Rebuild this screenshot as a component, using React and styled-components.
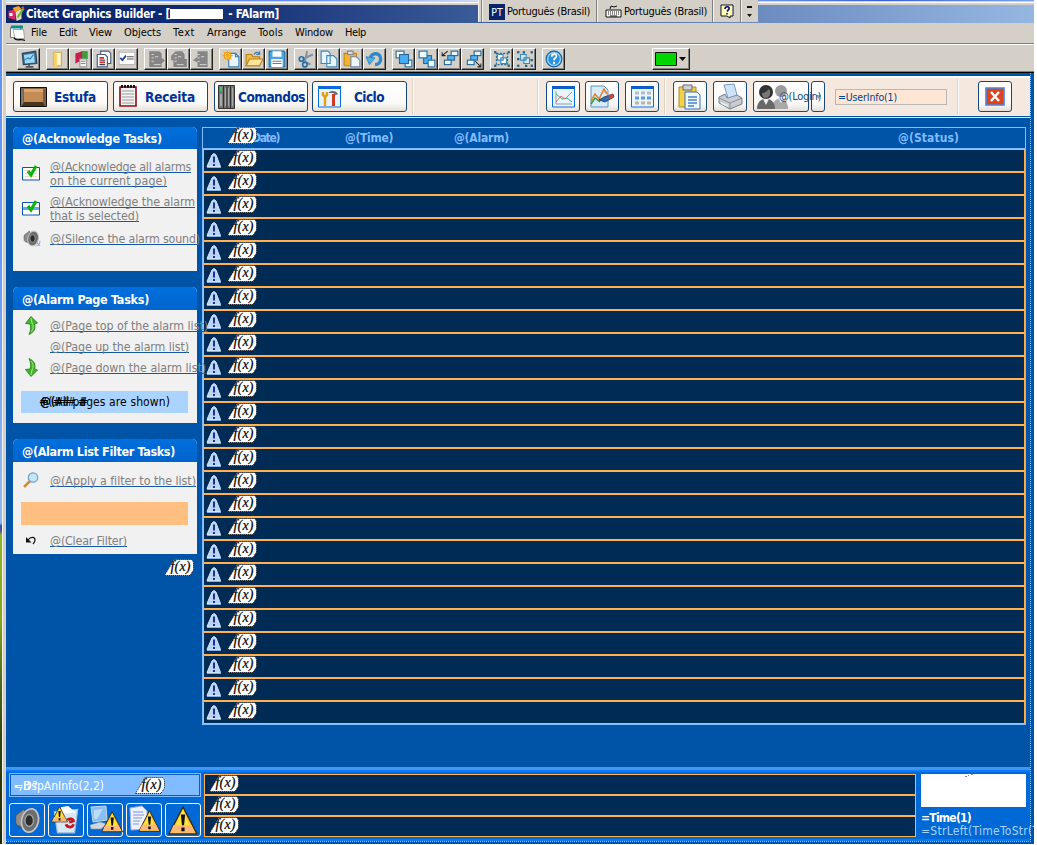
import React, { useLayoutEffect, useRef, useState } from "react";
import styled, { createGlobalStyle } from "styled-components";

const UI = `"DejaVu Sans Condensed", "DejaVu Sans", "Noto Sans", sans-serif`;

const Global = createGlobalStyle`
  * { box-sizing: border-box; }
  body { margin: 0; background: #fff; overflow: hidden; font-family: ${UI}; }
  svg { display: block; flex: none; overflow: visible; }
`;

/* ---------- text tracked to a given width ---------- */
const Tracked = styled.span`
  display: block;
  flex: none;
  white-space: pre;
  width: ${(p) => p.$w}px;
  font-size: ${(p) => p.$size || 12}px;
  line-height: ${(p) => p.$lh || 14}px;
  font-weight: ${(p) => (p.$bold ? 700 : 400)};
  color: ${(p) => p.$color || "inherit"};
`;
function Label({ w, size, lh, bold, color, children }) {
  const ref = useRef(null);
  const [spacing, setSpacing] = useState(0);
  useLayoutEffect(() => {
    setSpacing((w - ref.current.getBoundingClientRect().width) / children.length);
  }, [w, children]);
  return (
    <Tracked $w={w} $size={size} $lh={lh} $bold={bold} $color={color}>
      <span ref={ref} style={{ letterSpacing: spacing }}>{children}</span>
    </Tracked>
  );
}

/* ---------- window frame ---------- */
const Desktop = styled.div`
  width: 1034px; height: 844px; display: flex; overflow: hidden; position: relative;
  background: #d4d0c8;
`;
const Wallpaper = styled.div`
  width: 2px; flex: none;
  background: linear-gradient(#5f8ff0 0, #6c9df5 300px, #8db4f0 480px, #8fb5ee 523px, #3a4ea8 526px, #4656a8 531px, #8eb52a 535px, #84a51c 620px, #4f6a1c 680px, #31430f 740px, #1c2a0c 844px);
`;
const Frame = styled.div`
  width: 4px; flex: none; background: #d4d0c8; border-left: 1px solid #f4f2ec; border-right: 1px solid #d4d0c8;
`;
const Window = styled.div`
  flex: 1; min-width: 0; display: flex; flex-direction: column;
`;
const SkyLine = styled.div`
  height: 5px; flex: none;
  background: linear-gradient(transparent 1px, #d4d0c8 1px, #d4d0c8 2px, #fff 2px, #fff 3px, #d4d0c8 3px), linear-gradient(90deg, #dce8fb, #5d86e6 15%, #6a90ee 30%, #dfe8fb 48%, #6a8de4 75%, #3d62d2 85%, #7da2ee);
`;
const TitleBar = styled.div`
  height: 18px; flex: none; display: flex; align-items: center; padding: 0 0 0 2px; color: #fff;
  background: linear-gradient(90deg, #0a246a 0, #0f2a70 180px, #3a5a98 470px, #6c8cc0 752px, #96b6e2 1028px);
`;
const Redacted = styled.div`width: 53px; height: 10px; background: #fff; margin-right: 2px;`;
const MenuBar = styled.div`
  height: 21px; flex: none; display: flex; align-items: center; gap: 12px; padding: 0 0 0 4px;
  color: #000; border-bottom: 1px solid #808080;
`;
const MenuIcon = styled.div`width: 9px; flex: none;`;
const ToolBar = styled.div`
  height: 29px; flex: none; display: flex; gap: 6px; padding: 3px 0 0 11px;
  border-top: 1px solid #fff; border-bottom: 1px solid #000; box-shadow: inset 0 -1px #808080;
`;
const ToolGroup = styled.div`display: flex; margin-left: ${(p) => p.$push || 0}px;`;
const ToolButton = styled.div`
  width: ${(p) => p.$w || 23}px; height: 22px; display: flex; align-items: center; justify-content: center;
  background: #d4d0c8; border: 1px solid; border-color: #fff #202020 #202020 #fff;
  box-shadow: inset -1px -1px #808080;
`;
const LangBar = styled.div`
  position: absolute; left: 478px; top: 0; width: 280px; height: 22px; display: flex;
  background: #d4d0c8; color: #000; border-left: 1px solid #f2f0ea; padding-left: 2px;
`;
const LangCell = styled.div`
  width: ${(p) => p.$w}px; flex: none; display: flex; align-items: center; gap: 2px; padding: 1px 0 0 ${(p) => p.$pl}px;
  border-left: 1px solid #808080; box-shadow: inset 1px 0 #f4f2ec;
`;
const PT = styled.div`
  width: 16px; height: 16px; flex: none; background: #0a246a; color: #fff; font-size: 10.5px; line-height: 17px; text-align: center;
`;

/* ---------- page ---------- */
const Page = styled.div`
  flex: 1; min-height: 0; display: flex; background: #0054a8;
`;
const PageArea = styled.div`
  width: 1025px; flex: none; border-right: 1px dotted #ffb066; display: flex; flex-direction: column; height: 769px;
  border-bottom: 1px dotted #ffb066;
`;
const NavBar = styled.div`
  height: 40px; flex: none; margin-top: 3px; display: flex; align-items: center; padding: 0 0 0 7px;
  background: linear-gradient(90deg, #fdf7f2, #f4e8df 8px); border-top: 2px solid #fff; border-bottom: 1px solid #e8eef8;
`;
const NavRule = styled.div`height: 1px; flex: none; background: #dfe9f6; margin-top: 1px;`;
const NavButton = styled.div`
  width: ${(p) => p.$w || 34}px; height: 31px; flex: none; display: flex; align-items: center;
  justify-content: ${(p) => (p.$text ? "flex-start" : "center")}; padding-left: ${(p) => p.$pl || 0}px; gap: ${(p) => p.$gap || 0}px;
  margin-left: ${(p) => p.$ml || 0}px;
  border: 1px solid #164878; border-radius: 3px; color: #003399;
  background: linear-gradient(#fff, #faf9f7 75%, #e4e0d8);
`;
const Divider = styled.div`
  width: 2px; height: 35px; flex: none; margin-left: ${(p) => p.$ml}px; background: linear-gradient(90deg, #dfd3c2 50%, #fff 50%);
`;
const UserField = styled.div`
  width: 112px; height: 16px; flex: none; margin-left: 10px; padding-left: 2px; background: #fee6d5;
  border: 1px solid #b8b8b8; color: #00438c; display: flex; align-items: center;
`;
const LoginText = styled.div`position: relative; z-index: 1; width: 0; margin-left: -10px; color: #1b4b84;`;

const Body = styled.div`height: 649px; flex: none; display: flex; padding: 9px 0 0 7px; gap: 5px;`;
const Side = styled.div`width: 184px; flex: none; display: flex; flex-direction: column; position: relative; z-index: 1;`;
const TaskPanel = styled.div`
  height: ${(p) => p.$h}px; flex: none; margin-bottom: 16px; display: flex; flex-direction: column; background: #f1f1f1;
  border-radius: 5px 5px 0 0;
`;
const TaskHead = styled.div`
  height: ${(p) => p.$h}px; flex: none; padding: ${(p) => p.$h - 17}px 0 0 9px; color: #fff; border-radius: 5px 5px 0 0;
  background: linear-gradient(#006fdd, #0064cc);
`;
const TaskRow = styled.div`
  display: flex; flex: none; margin-top: ${(p) => p.$mt}px; height: ${(p) => p.$h || 14}px; align-items: center;
`;
const IconSlot = styled.div`width: 36px; margin-right: 1px; flex: none; display: flex; justify-content: center; align-items: center; height: 0; padding-bottom: 2px;`;
const LinkLine = styled.div`
  width: max-content; height: 13px; margin-bottom: 1px; border-bottom: 1px solid #1458a4; color: #808080;
`;
const InfoBox = styled.div`
  width: 167px; height: ${(p) => p.$h}px; flex: none; margin: ${(p) => p.$mt}px 0 0 8px; padding: 4px 0 0 19px;
  background: ${(p) => p.$bg}; color: #000; display: flex;
`;
const Overprint = styled.div`width: 0; margin-left: ${(p) => p.$ml || 0}px; white-space: nowrap;`;
const SideBadge = styled.div`margin: -11px 0 0 151px;`;

const Table = styled.div`
  width: 824px; height: 598px; flex: none; border: 1px solid #80bcff; display: flex; flex-direction: column;
`;
const TableHead = styled.div`
  height: 21px; flex: none; display: flex; align-items: center; color: #80bcff; border-bottom: 1px solid #80bcff; padding-left: 24px;
`;
const HeadGap = styled.div`width: ${(p) => p.$w}px; flex: none;`;
const AlarmRow = styled.div`
  height: 23px; flex: none; background: #002b54; border: 1px solid #ffb04f; display: flex; gap: 5px; padding-left: 2px;
`;
const HeadBadge = styled.div`width: 0; height: 20px; margin-top: -2px; position: relative; z-index: 1;`;

/* ---------- footer ---------- */
const Footer = styled.div`
  flex: 1; display: flex; background: #0069d5; border-top: 3px solid #4595e8; border-bottom: 2px solid #0a78f5;
  box-shadow: inset 0 2px #087aff; padding: 3px 0 0 3px; gap: 3px;
`;
const FootLeft = styled.div`width: 192px; flex: none; display: flex; flex-direction: column; gap: 6px;`;
const InfoStrip = styled.div`
  height: 24px; border: 1px solid #80bcff; box-shadow: inset 0 0 0 1px #0a5dbb; background: #80bcff;
  display: flex; align-items: center; color: #fff; padding: 2px 1px 1px 4px;
`;
const FootButtons = styled.div`display: flex; gap: 3px;`;
const FootButton = styled.div`
  width: 36px; height: 34px; border: 1px solid #fff; border-radius: 3px; display: flex; align-items: center; justify-content: center;
  background: #0069d5;
`;
const FootList = styled.div`width: 712px; flex: none; padding-top: 1px;`;
const FootRow = styled.div`height: 21px; background: #002b54; border: 1px solid #ffb04f; padding-left: 4px;`;
const Clock = styled.div`width: 110px; flex: none; padding: 1px 0 0 2px; color: #fff;`;
const ClockBox = styled.div`width: 105px; height: 33px; background: #fff; margin-bottom: 4px; padding: 0 0 0 44px;`;

/* ---------- drawings ---------- */
const Fx = () => (
  <svg width="31" height="17" viewBox="0 0 31 17">
    <path d="M.5 16.500 10 .5H27.500L29.500 3V11L26 16.500Z" fill="#fff" />
    <path d="M.5 16.500 10 .5H27.500L29.500 3V11L26 16.500Z" stroke="#111" fill="none" strokeDasharray="1 1" />
    <text x="6.500" y="12" fontFamily="Liberation Serif, serif" fontStyle="italic" fontSize="14" textLength="20" lengthAdjust="spacing" stroke="#000" strokeWidth=".2">f(x)</text>
  </svg>
);
const RowAlert = () => (
  <svg width="16" height="19" viewBox="0 0 16 19">
    <path d="M8 3.500 10 5 14.500 16.500H1L6 5Z" fill="#b9d4f5" stroke="#d2e4fb" />
    <path d="M1 17.500h14" stroke="#7faee8" />
    <path d="M8 6.500v6M8 14v2" stroke="#0b1f8a" strokeWidth="1.800" />
  </svg>
);
const Svg = ({ w = 18, h = 18, v = "0 0 16 16", children }) => (
  <svg width={w} height={h} viewBox={v} fill="none">{children}</svg>
);
const Squares = ({ a, b, c }) => (
  <Svg>
    <rect x="1" y="1" width="7" height="6" fill={a} stroke="#27699c" />
    <rect x="9" y="9" width="6" height="6" fill={c} stroke="#27699c" />
    <rect x="4" y="4" width="8" height="8" fill={b} stroke="#27699c" />
  </Svg>
);
const BackSquares = () => (
  <Svg>
    <rect x="5" y="5" width="7" height="7" fill="#48aef4" stroke="#27699c" />
    <rect x="1" y="1" width="7" height="6" fill="#eef8ff" stroke="#27699c" />
    <rect x="9" y="9" width="6" height="6" fill="#eef8ff" stroke="#27699c" />
  </Svg>
);
const Stacks = ({ down }) => (
  <Svg>
    {[[9, 1], [6, 5], [3, 9]].map(([x, y], i) => (
      <rect key={i} x={x} y={y} width="6" height="4" fill={i === 1 ? "#55b4f5" : "#e5f3fd"} stroke="#27699c" />
    ))}
    <path d={down ? "M10 10l5 5M15 12v3h-3" : "M6 1 1 5M1 2v3h3"} stroke="#222" strokeWidth=".9" />
  </Svg>
);
const Gears = ({ d }) => (
  <Svg>
    <path d={d} fill="#858585" />
    <path d="M4 4h2M4 7h2M4 10h2M7 6h3M6 13h6" stroke="#ddd" strokeWidth=".8" />
  </Svg>
);
const GroupIcon = ({ inner }) => (
  <Svg>
    {!inner && <path d="M3 3h10v10H3Z" stroke="#277099" strokeDasharray="2 1" />}
    <path d="M4 4h5v5H4zM7 7h5v5H7z" fill={inner ? "#d8eaf5" : "#fff"} stroke="#398ab8" />
    {[[1, 1], [13, 1], [1, 13], [13, 13]].map(([x, y]) => <rect key={x + "-" + y} x={x} y={y} width="2" height="2" fill="#215a80" />)}
    {inner && <path d="M6 1h2v2H6zM1 7h2v2H1zM13 8h2v2h-2zM8 13h2v2H8z" fill="#215a80" />}
  </Svg>
);
const tools = {
  monitor: <Svg><path d="M2 3 14 1l1 11-12 1Z" fill="#3c6e96" stroke="#28455e" /><path d="m3.500 4.500 9-1.500.6 8L4.500 12Z" fill="#9fd8f8" /><path d="m4 9 3-2 2 1 3-4" stroke="#2b7db5" /><path d="M5 15h7M8 12v3" stroke="#555" strokeWidth="1.500" /></Svg>,
  folder: <Svg><path d="M4 2h7v12H4z" fill="#fff7cc" stroke="#d9a536" /><path d="m4 2 3 2v12l-3-2Z" fill="#f8cf60" /></Svg>,
  red: <Svg><path d="M8 1h6v7H8z" fill="#36a03b" /><path d="m3 3 6-2v8l-6 3Z" fill="#c81e50" /><path d="M7 8h6v7H7z" fill="#f4f4f4" stroke="#999" /><path d="M8 10h4M8 12h4" stroke="#888" /></Svg>,
  docs: <Svg><path d="M5 1h7l2 2v9H5z" fill="#fff" stroke="#485a80" /><path d="M2 4h7l2 2v9H2z" fill="#fff" stroke="#485a80" /><path d="M4 7h4M4 11h5" stroke="#d22" strokeWidth="1.500" /><path d="M4 9h5M4 13h5" stroke="#345" /></Svg>,
  check: <Svg><path d="M1 2h14v11H1z" fill="#fff" stroke="#bbb" /><path d="m2 7 2 2 3-4" stroke="#223d90" strokeWidth="1.500" /><path d="M8 6h6M8 8h6" stroke="#555" /></Svg>,
  g1: <Gears d="M2 1h9l2 2v4l3 2-3 3v3H2z" />,
  g2: <Gears d="M1 5l4-4h6l2 3v4h2v7H3V9H1z" />,
  g3: <Gears d="M4 1h9v14H4v-4L0 9l4-3z" />,
  fresh: <Svg><path d="M6 3h6l3 3v9H6z" fill="#e8f6ff" stroke="#367eb0" /><path d="M12 3v3h3" stroke="#367eb0" /><circle cx="5" cy="5" r="3" fill="#ffdb3b" stroke="#f29a18" /><path d="M5 0v10M0 5h10M1.500 1.500l7 7M8.500 1.500l-7 7" stroke="#f5a31f" strokeWidth=".8" /></Svg>,
  open: <Svg><path d="M1 4h5l1 2h6v8H1z" fill="#f0ba42" stroke="#b78019" /><path d="M4 8h12l-3 6H1z" fill="#ffe49a" stroke="#b78019" /><path d="M8 4c2-3 4-2 5 0m0 0V1m0 3h-3" stroke="#3774a8" /></Svg>,
  save: <Svg><path d="M1 1h13l1 1v13H1z" fill="#49a6e2" stroke="#1f70ad" /><path d="M4 1h8v5H4zM3 8h10v7H3z" fill="#fff" /><path d="M4 10h8M4 12h8" stroke="#777" /></Svg>,
  cut: <Svg><path d="m5 8 9-4M5 9l7 4M9 1 7 10" stroke="#7d93a6" strokeWidth="1.800" /><circle cx="4" cy="8" r="2" stroke="#286fa9" strokeWidth="1.500" /><circle cx="7" cy="13" r="2" stroke="#286fa9" strokeWidth="1.500" /></Svg>,
  copy: <Svg><path d="M1 1h6l2 2v9H1zM6 5h6l3 3v7H6z" fill="#eaf6ff" stroke="#3e87b9" /></Svg>,
  paste: <Svg><path d="M1 3h11v11H1z" fill="#f6b22e" stroke="#c98515" /><path d="M4 1h5v3H4z" fill="#ddd" stroke="#888" /><path d="M7 6h5l3 3v6H7z" fill="#eef7ff" stroke="#6d87a0" /></Svg>,
  undo: <Svg><path d="M4 7C5 2 13 2 13 8c0 3-2 5-5 5" stroke="#2f88cc" strokeWidth="3" /><path d="m0 6 8 1-5 6z" fill="#52afe8" stroke="#2473ad" strokeWidth=".6" /></Svg>,
  front: <Squares a="#fff" b="#48aef4" c="#eaf6ff" />,
  back: <BackSquares />,
  fwd: <Stacks />, bwd: <Stacks down />,
  group: <GroupIcon />, ungroup: <GroupIcon inner />,
  help: <Svg><circle cx="8" cy="8" r="7" fill="#2a92dc" stroke="#1766a5" /><circle cx="8" cy="8" r="5.700" stroke="#a5dcff" /><path d="M6 6c0-3 5-3 4 0-.500 1.500-2 1-2 3M8 10.500v2" stroke="#fff" strokeWidth="1.600" /></Svg>,
};
const groups = [["monitor"], ["folder", "red", "docs", "check"], ["g1", "g2", "g3"], ["fresh", "open", "save"], ["cut", "copy", "paste", "undo"], ["front", "back", "fwd", "bwd"], ["group", "ungroup"], ["help"]];

const AppLogo = () => (
  <Svg w={17} h={16}><path d="M0 5 7 3v11l-7-2Z" fill="#d42a68" /><path d="m4 2 6-2 3 3-6 3z" fill="#f3a52a" /><path d="m7 6 6-3v10l-5 2z" fill="#e9dcc2" /><path d="m8 11 6-9 2 1-6 9z" fill="#6dbb3a" /><path d="M1 7h3v3H1z" fill="#fff" /><path d="M12 2 15 0l1 3" fill="#e43" /></Svg>
);
const DocLogo = () => (
  <Svg w={16} h={17} v="0 0 16 17"><path d="M.5 2.500h10v10H.5z" fill="#fff" stroke="#777" /><path d="M1 .5h12v3H1z" fill="#0b8d8d" /><path d="M3 4.500h10.500l1 9H5z" fill="#fff" stroke="#888" strokeWidth=".7" /><path d="M4 13c3 4 6 0 11 2.500" stroke="#111" strokeWidth="1.300" /></Svg>
);
const Oven = () => (
  <Svg w={27} h={20} v="0 0 27 20"><path d="M.5.500h26v19H.5z" fill="#8b6238" stroke="#111" /><path d="M4 2h19v13H4z" fill="#c48b55" /><path d="M4 2h19v3H4z" fill="#dba873" /><path d="M4 15h19l2 4H2z" fill="#48331f" /><path d="M2 3v14" stroke="#777" strokeWidth="2" /><path d="M24.500 3v13" stroke="#7b5a3a" strokeWidth="2" /></Svg>
);
const Notebook = () => (
  <Svg w={19} h={23} v="0 0 19 23"><path d="M1 2h16v19H1z" fill="#f4f4f4" stroke="#8c0c14" strokeWidth="1.600" /><path d="M2 1.500h15" stroke="#111" strokeWidth="3" strokeDasharray="2 1" /><path d="M3 6h12M3 9h12M3 12h12M3 15h12M3 18h12" stroke="#999" /></Svg>
);
const Rack = () => (
  <Svg w={17} h={24} v="0 0 17 24"><path d="M.5.500h16v23H.5z" fill="#777" stroke="#333" /><path d="M5.500 1v22M9 1v22M12.500 1v22" stroke="#333" /><path d="M2 2h2v4H2z" fill="#3c5" /><path d="M2 9h2v12H2zM7 3h1v18H7zM10 3h1v18h-1zM14 3h1v18h-1z" fill="#aaa" /></Svg>
);
const ToolsIcon = () => (
  <Svg w={23} h={22} v="0 0 23 22"><path d="M.5.500h22v20.500H.5z" fill="#e9f4ff" stroke="#0c6de0" /><path d="M0 0h23v3H0z" fill="#0b68e0" /><path d="M5 6v3l2 2 2-2V6M7 11v9" stroke="#e0a012" strokeWidth="2.500" /><path d="M11 6c4-2 7-1 9 2l-2 1-3-2h-4z" fill="#667" /><path d="M15.500 8v12" stroke="#d33a22" strokeWidth="3" /></Svg>
);
const WinBase = () => (<><path d="M.5.500h22v20.500H.5z" fill="#eaf5ff" stroke="#0c6de0" /><path d="M0 0h23v3H0z" fill="#0b5fc8" /></>);
const Trend = () => (
  <Svg w={23} h={22} v="0 0 23 22"><WinBase /><path d="M4 5v13h16" stroke="#999" /><path d="m4 8 6 5 5-1 5 4" stroke="#38b870" /><path d="m4 16 5-6 4 3 7-7" stroke="#e06a78" /></Svg>
);
const GridIcon = () => (
  <Svg w={23} h={22} v="0 0 23 22"><WinBase />{[7, 12, 17].map((y, i) => <path key={y} d={`M4 ${y}h4M10 ${y}h4M16 ${y}h4`} stroke={["#b4bcc8", "#5f9ad6", "#c4b49a"][i]} strokeWidth="3" />)}</Svg>
);
const ChartPen = () => (
  <Svg w={26} h={25} v="0 0 26 25"><path d="M2 2h13l4 4v17H2z" fill="#d9ecfb" stroke="#5c93c0" /><path d="m2 17 4-7 4 5 5-10 3 5" stroke="#e57b22" strokeWidth="1.500" /><path d="m2 20 4-6 5 4" stroke="#2b9a3c" strokeWidth="1.500" /><path d="m10 16 5-3 9-3 1 3-9 5z" fill="#2f6fb8" stroke="#223" strokeWidth=".7" /><path d="m19 11 5-1 1 3-4 2z" fill="#d8452c" /></Svg>
);
const Clip = () => (
  <Svg w={26} h={26} v="0 0 26 26"><path d="M2 3h17v20H2z" fill="#f2d04a" stroke="#b18a18" /><path d="M6 1h9v5H6z" fill="#cdd3dd" stroke="#667" /><path d="M8 8h12l3 3v14H8z" fill="#f0f7ff" stroke="#356eb0" /><path d="M11 13h9M11 16h9M11 19h9M11 22h6" stroke="#4d82c2" strokeWidth="1.300" /></Svg>
);
const Printer = () => (
  <Svg w={27} h={26} v="0 0 27 26"><path d="m2 13 6-3 2 4 10-3 5 3v6l-12 5L2 19z" fill="#c9cdd3" stroke="#777f89" /><path d="m7 1 10-1 3 11-9 3z" fill="#cfe4fb" stroke="#7898bd" /><path d="m2 14 11 5 12-5M13 19v6" stroke="#8a9098" /><path d="m4 18 7 3v2l-7-3z" fill="#eee" /></Svg>
);
const Users = () => (
  <Svg w={32} h={26} v="0 0 32 26"><circle cx="24" cy="7" r="6" fill="#9b9b9b" /><path d="M15 25c0-14 16-14 16 0z" fill="#a8a8a8" /><path d="m21 14 3 5 3-5" fill="#eee" /><circle cx="9" cy="8" r="7" fill="#333" /><path d="M5 9c3 0 5-2 7-4 3 4 0 9-3 9s-4-2-4-5" fill="#777" /><path d="M0 25c0-14 18-14 18 0z" fill="#686868" /><path d="m6 15 3 6 3-6" fill="#eee" /></Svg>
);
const CloseIcon = () => (
  <Svg w={20} h={19} v="0 0 20 19"><path d="M1 1h18v17H1z" fill="#dc4420" stroke="#4a84dc" strokeWidth="1.600" /><path d="m6 5 8 9m0-9-8 9" stroke="#fff" strokeWidth="2.400" /></Svg>
);
const Tick = ({ sel }) => (
  <Svg w={19} h={16} v="0 0 19 16"><path d="M.5 2.500h17v12.500H.5z" fill="#fff" stroke="#0b56a8" />{sel ? <path d="M1 8.500h16" stroke="#6aa8ee" strokeWidth="3" /> : <path d="M3 5.500h12M3 8.500h12M3 11.500h12" stroke="#ecd9c0" />}<path d="m6 6 3 4 5-9" stroke="#08b40c" strokeWidth="3" /></Svg>
);
const Speaker = ({ s = 17 }) => (
  <Svg w={s} h={s}><path d="M1 6c0-2 2-2 5-5l4 13c-3-2-9-2-9-5z" fill="#8d8d8d" stroke="#4a4a4a" strokeWidth=".5" /><ellipse cx="9.500" cy="8" rx="5" ry="7" transform="rotate(12 9.500 8)" fill="#6d6d6d" stroke="#c4c4c4" /><ellipse cx="9" cy="8" rx="2.500" ry="3.500" fill="#2c2c2c" stroke="#aaa" strokeWidth=".7" />{s < 20 && <path d="M12 15c3 0 4-3 4-5M13 12l3 3" stroke="#8ea2e0" />}</Svg>
);
const Arrow = ({ down }) => (
  <Svg w={13} h={19} v="0 0 13 19">
    <g transform={down ? "matrix(1 0 0 -1 0 19)" : undefined}><path d="M6 .5 12.500 7 9.500 8C11 13 9 16 4 18.500 6 14 6 11 5 8L.5 7.500Z" fill="#43b52a" stroke="#1c7d10" strokeWidth=".8" /><path d="M6 2 7 7c2 4 1 7-1 9" stroke="#a5ea7c" /></g>
  </Svg>
);
const Lens = () => (
  <Svg w={16} h={16}><path d="m1 15 6-6" stroke="#d88a30" strokeWidth="2.500" /><circle cx="10" cy="5.500" r="4.700" fill="#bfe8fa" stroke="#7f9ec4" strokeWidth="1.300" /></Svg>
);
const ClearIcon = () => (
  <Svg w={10} h={8} v="0 0 10 8"><path d="M2 4c3-4 7-3 7 0 0 2-1 3-2 4" stroke="#111" strokeWidth="1.200" /><path d="M0 1v5.500h5.500z" fill="#111" /></Svg>
);
const Warn = ({ x = 0, y = 0, k = 1 }) => (
  <g transform={`translate(${x} ${y}) scale(${k})`}><path d="M14 1 27 26H1Z" fill="#ffc83c" stroke="#3a2a08" strokeWidth="1.200" strokeLinejoin="round" /><path d="M14 3 4 24h18z" fill="#ffe23c" /><path d="M5 18h17l3 7H2z" fill="#ffb878" /><path d="M12 8h4l-1 10h-2zM12.500 20h3v3.500h-3z" fill="#111" /></g>
);
const footIcons = [
  <Speaker s={27} />,
  <Svg w={30} h={30} v="0 0 28 28"><path d="m3 6 22-2-3 22H6z" fill="#d6e8f4" stroke="#9fc1da" /><path d="m9 2 7-1 7 6-12 1z" fill="#fff" /><path d="M15 14c2-2 6-1 6 1l-4 1m4 2c-1 4-6 3-7 0" stroke="#c41820" strokeWidth="2.500" /><Warn x={0} y={1} k={0.57} /></Svg>,
  <Svg w={32} h={30} v="0 0 32 30"><path d="m2 2 15-1 1 14-14 2z" fill="#88bff2" stroke="#c3d7ee" /><path d="m5 5 9-1-6 10H5z" fill="#b8dcfa" /><path d="m1 20 10-3 7 2-6 5H2z" fill="#ccd6e2" stroke="#899" strokeWidth=".6" /><Warn x={12} y={6} k={0.8} /></Svg>,
  <Svg w={32} h={30} v="0 0 32 30"><path d="M2 3 14 1l5 5v18L3 25z" fill="#eef2ff" stroke="#9db0dd" /><path d="M5 7h10M5 10h11M5 13h9M5 16h7M5 19h6" stroke="#8094d4" /><Warn x={10} y={5} k={0.82} /></Svg>,
  <Svg w={30} h={29} v="0 0 28 27"><Warn /></Svg>,
];

const menus = [["File", 16], ["Edit", 18], ["View", 23], ["Objects", 37], ["Text", 22], ["Arrange", 39], ["Tools", 25], ["Window", 38], ["Help", 21]];

const Task = ({ mt, icon, lines }) => (
  <TaskRow $mt={mt} $h={lines.length * 14}>
    <IconSlot>{icon}</IconSlot>
    <div>{lines.map(([t, w]) => <LinkLine key={t}><Label w={w} size={12.3}>{t}</Label></LinkLine>)}</div>
  </TaskRow>
);

export default function App() {
  return (
    <Desktop>
      <Global />
      <Wallpaper />
      <Frame />
      <Window>
        <SkyLine />
        <TitleBar>
          <AppLogo />
          <HeadGap $w={1} />
          <Label w={144} size={11.5} bold>Citect Graphics Builder - [</Label>
          <Redacted />
          <Label w={54} size={11.5} bold> - FAlarm]</Label>
        </TitleBar>
        <MenuBar>
          <MenuIcon><DocLogo /></MenuIcon>
          {menus.map(([t, w]) => <Label key={t} w={w} size={11}>{t}</Label>)}
        </MenuBar>
        <ToolBar>
          {groups.map((g, i) => (
            <ToolGroup key={i}>{g.map((n) => <ToolButton key={n}>{tools[n]}</ToolButton>)}</ToolGroup>
          ))}
          <ToolGroup $push={81}>
            <ToolButton $w={38}>
              <Svg w={32} h={15} v="0 0 32 15"><path d="M.5.500h21v13H.5z" fill="#00d400" stroke="#111" /><path d="M24 5h7l-3.500 4z" fill="#000" /></Svg>
            </ToolButton>
          </ToolGroup>
        </ToolBar>
        <Page>
          <PageArea>
            <NavBar>
              <NavButton $text $w={95} $pl={6} $gap={7}><Oven /><Label w={42} size={13.5} lh={16} bold>Estufa</Label></NavButton>
              <NavButton $text $w={95} $ml={5} $pl={5} $gap={7}><Notebook /><Label w={50} size={13.5} lh={16} bold>Receita</Label></NavButton>
              <NavButton $text $w={94} $ml={6} $pl={3} $gap={3}><Rack /><Label w={67} size={13.5} lh={16} bold>Comandos</Label></NavButton>
              <NavButton $text $w={95} $ml={4} $pl={5} $gap={13}><ToolsIcon /><Label w={30} size={13.5} lh={16} bold>Ciclo</Label></NavButton>
              <Divider $ml={5} />
              <Divider $ml={123} />
              <NavButton $ml={7}><Trend /></NavButton>
              <NavButton $ml={5}><ChartPen /></NavButton>
              <NavButton $ml={6}><GridIcon /></NavButton>
              <Divider $ml={5} />
              <NavButton $ml={7}><Clip /></NavButton>
              <NavButton $ml={6}><Printer /></NavButton>
              <NavButton $text $w={56} $ml={6} $pl={3}><Users /><LoginText><Label w={42} size={11}>@(Login)</Label></LoginText></NavButton>
              <NavButton $ml={2} $w={14}><Svg w={5} h={4} v="0 0 5 4"><path d="M0 0h5L2.500 4z" fill="#999" /></Svg></NavButton>
              <UserField><Label w={59} size={10.5}>=UserInfo(1)</Label></UserField>
              <Divider $ml={10} />
              <NavButton $ml={19}><CloseIcon /></NavButton>
            </NavBar>
            <NavRule />
            <Body>
              <Side>
                <TaskPanel $h={144}>
                  <TaskHead $h={22}><Label w={140} size={12.5} bold>@(Acknowledge Tasks)</Label></TaskHead>
                  <Task mt={11} icon={<Tick />} lines={[["@(Acknowledge all alarms", 141], ["on the current page)", 117]]} />
                  <Task mt={7} icon={<Tick sel />} lines={[["@(Acknowledge the alarm", 145], ["that is selected)", 89]]} />
                  <Task mt={9} icon={<Speaker />} lines={[["@(Silence the alarm sound)", 150]]} />
                </TaskPanel>
                <TaskPanel $h={136}>
                  <TaskHead $h={23}><Label w={127} size={12.5} bold>@(Alarm Page Tasks)</Label></TaskHead>
                  <Task mt={9} icon={<Arrow />} lines={[["@(Page top of the alarm list)", 158]]} />
                  <Task mt={7} lines={[["@(Page up the alarm list)", 139]]} />
                  <Task mt={7} icon={<Arrow down />} lines={[["@(Page down the alarm list)", 156]]} />
                  <InfoBox $h={22} $mt={16} $bg="#aad4ff">
                    <Overprint><Label w={48}>@(#.# #</Label></Overprint>
                    <Overprint $ml={-1}><Label w={48}>#(## .#</Label></Overprint>
                    <Overprint $ml={1}><Label w={130}>@(All pages are shown)</Label></Overprint>
                  </InfoBox>
                </TaskPanel>
                <TaskPanel $h={115}>
                  <TaskHead $h={23}><Label w={153} size={12.5} bold>@(Alarm List Filter Tasks)</Label></TaskHead>
                  <Task mt={12} icon={<Lens />} lines={[["@(Apply a filter to the list)", 146]]} />
                  <InfoBox $h={23} $mt={14} $bg="#ffbf80" />
                  <Task mt={9} icon={<ClearIcon />} lines={[["@(Clear Filter)", 77]]} />
                </TaskPanel>
                <SideBadge><Fx /></SideBadge>
              </Side>
              <Table>
                <TableHead>
                  <HeadBadge><Fx /></HeadBadge>
                  <HeadGap $w={12} />
                  <Label w={40} bold>@(Date)</Label>
                  <HeadGap $w={66} />
                  <Label w={48} bold>@(Time)</Label>
                  <HeadGap $w={61} />
                  <Label w={55} bold>@(Alarm)</Label>
                  <HeadGap $w={389} />
                  <Label w={61} bold>@(Status)</Label>
                </TableHead>
                {Array.from({ length: 25 }, (_, i) => <AlarmRow key={i}><RowAlert /><Fx /></AlarmRow>)}
              </Table>
            </Body>
            <Footer>
              <FootLeft>
                <InfoStrip>
                  <Overprint><Label w={24}>=D?</Label></Overprint>
                  <Overprint><Label w={17}>-,3</Label></Overprint>
                  <Label w={90}>=DspAnInfo(2,2)</Label>
                  <HeadGap $w={31} />
                  <Fx />
                </InfoStrip>
                <FootButtons>{footIcons.map((ic, i) => <FootButton key={i}>{ic}</FootButton>)}</FootButtons>
              </FootLeft>
              <FootList>{[0, 1, 2].map((i) => <FootRow key={i}><Fx /></FootRow>)}</FootList>
              <Clock>
                <ClockBox><Svg w={10} h={4} v="0 0 10 4"><path d="M0 2.500h2M3 1.500h1M6 .5h2" stroke="#888" /></Svg></ClockBox>
                <Label w={50} size={12} bold>=Time(1)</Label>
                <Label w={139} size={12} lh={13} color="#a5d2ff">=StrLeft(TimeToStr(Time</Label>
              </Clock>
            </Footer>
          </PageArea>
        </Page>
      </Window>
      <LangBar>
        <LangCell $w={115} $pl={7}><PT>PT</PT><Label w={83} size={11}>Português (Brasil)</Label></LangCell>
        <LangCell $w={116} $pl={8}>
          <Svg w={17} h={14} v="0 0 17 14"><path d="M1 5h15v7H1z" fill="#fff" stroke="#111" /><path d="M3 7h11M3 9h11" stroke="#111" strokeDasharray="1 1" /><path d="M5 11h7M5 4l1-3 3 1 3-1" stroke="#111" /></Svg>
          <Label w={83} size={11}>Português (Brasil)</Label>
        </LangCell>
        <LangCell $w={28} $pl={7}>
          <Svg w={14} h={15} v="0 0 14 15"><path d="M1 1h12v11h-3v2l-3-2H1z" fill="#fff" stroke="#111" /><path d="M2 2h10v9H2z" fill="#ffffb4" /><path d="M5 5c0-3 5-3 4 0L7 7.500M7 9v1.500" stroke="#00008b" strokeWidth="1.600" /></Svg>
        </LangCell>
        <LangCell $w={18} $pl={6}><Svg w={5} h={12} v="0 0 5 12"><path d="M0 1h5" stroke="#111" strokeWidth="2" /><path d="M0 8h5L2.500 11z" fill="#111" /></Svg></LangCell>
      </LangBar>
    </Desktop>
  );
}
